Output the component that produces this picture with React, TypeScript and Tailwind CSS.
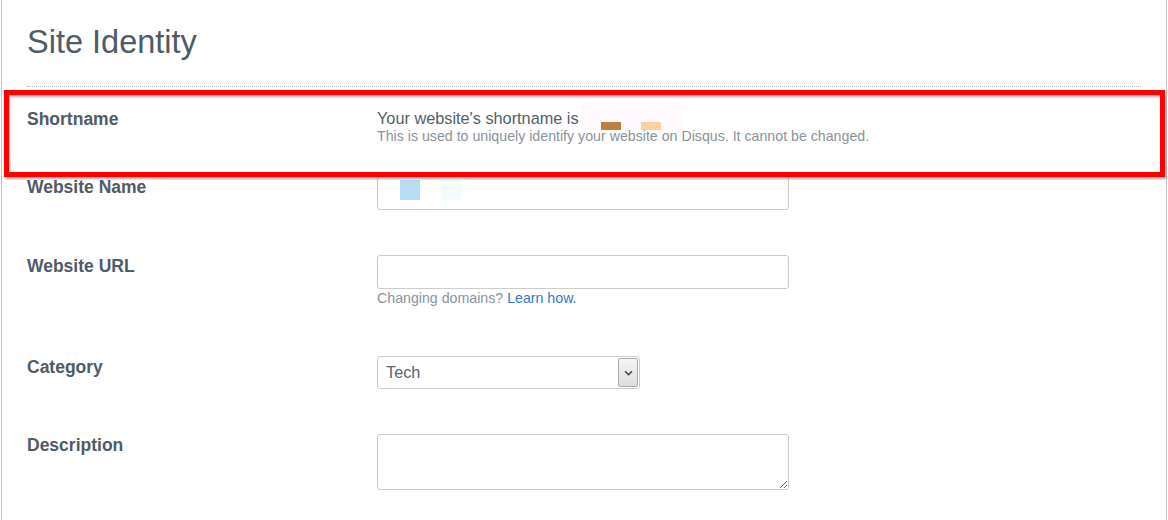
import React from "react";

const labelCls = "text-[17.5px] leading-[22px] font-bold text-[#4f5b66]";

function Row({ label, className, children }: { label: string; className: string; children: React.ReactNode }) {
    return (
        <div className={`grid grid-cols-[350px_412px] ${className}`}>
            <div className={labelCls}>{label}</div>
            <div>{children}</div>
        </div>
    );
}

export default function App() {
    return (
        <div className="w-[1168px] h-[520px] overflow-hidden bg-white pl-[1px] font-['Liberation_Sans',Arial,sans-serif]">
            <div className="relative h-full w-[1166px] border-x border-[#c8c8c8] pl-[25px] pr-[25px] pt-[23px]">
                <h1 className="text-[32.5px] leading-[38px] font-normal text-[#4f5b66]">Site Identity</h1>
                <div className="mt-[25px] border-t border-dotted border-[#b8b8b8]" />

                <Row label="Shortname" className="mt-[21px]">
                    <div className="text-[16.3px] leading-[20px] text-[#545e69] whitespace-nowrap">
                        Your website's shortname is
                        <span className="ml-[2px] inline-flex items-end gap-[20px] pl-[20px] w-[101px] h-[28px] -mt-[6px] -mb-[2px] align-top bg-[#fff8fc]">
                            <span className="w-[20px] h-[8px] bg-[#c17d3f]" />
                            <span className="w-[20px] h-[8px] bg-[#fdd0a0]" />
                        </span>
                    </div>
                    <div className="text-[14.2px] leading-[17px] text-[#8a939c] whitespace-nowrap">
                        This is used to uniquely identify your website on Disqus. It cannot be changed.
                    </div>
                </Row>

                <Row label="Website Name" className="mt-[31px]">
                    <div className="h-[34px] w-[412px] rounded-[3px] border border-[#cccccc] flex gap-[21px] pl-[22px] pt-[3px]">
                        <span className="w-[20px] h-[20px] bg-[#b8dcf4]" />
                        <span className="w-[20px] h-[20px] bg-[#f3fdff]" />
                    </div>
                </Row>

                <Row label="Website URL" className="mt-[45px]">
                    <input className="block h-[34px] w-[412px] rounded-[3px] border border-[#cccccc] outline-none" />
                    <div className="mt-[1px] text-[14.2px] leading-[17px] text-[#8a939c]">
                        Changing domains? <span className="text-[#2e7cc6]">Learn how.</span>
                    </div>
                </Row>

                <Row label="Category" className="mt-[49px]">
                    <div className="flex h-[33px] w-[263px] rounded-[3px] border border-[#cccccc] overflow-hidden">
                        <div className="flex-1 pl-[8px] text-[16.3px] leading-[31px] text-[#5a6570]">Tech</div>
                        <div className="my-[1px] mr-[1px] w-[20px] flex items-center justify-center rounded-[2px] border border-[#a9a9a9] bg-gradient-to-b from-[#f5f5f5] to-[#dedede]">
                            <svg width="9" height="6" viewBox="0 0 9 6">
                                <path d="M1 1.2 L4.5 4.6 L8 1.2" fill="none" stroke="#4a4a4a" strokeWidth="1.6" />
                            </svg>
                        </div>
                    </div>
                </Row>

                <Row label="Description" className="mt-[45px]">
                    <textarea className="block h-[56px] w-[412px] rounded-[3px] border border-[#cccccc] outline-none resize" />
                </Row>

                <div className="absolute left-[2px] top-[90px] w-[1161px] h-[87px] border-[5px] border-[#ff0000] drop-shadow-[1px_2px_1px_rgba(0,0,0,0.35)]" />
            </div>
        </div>
    );
}
